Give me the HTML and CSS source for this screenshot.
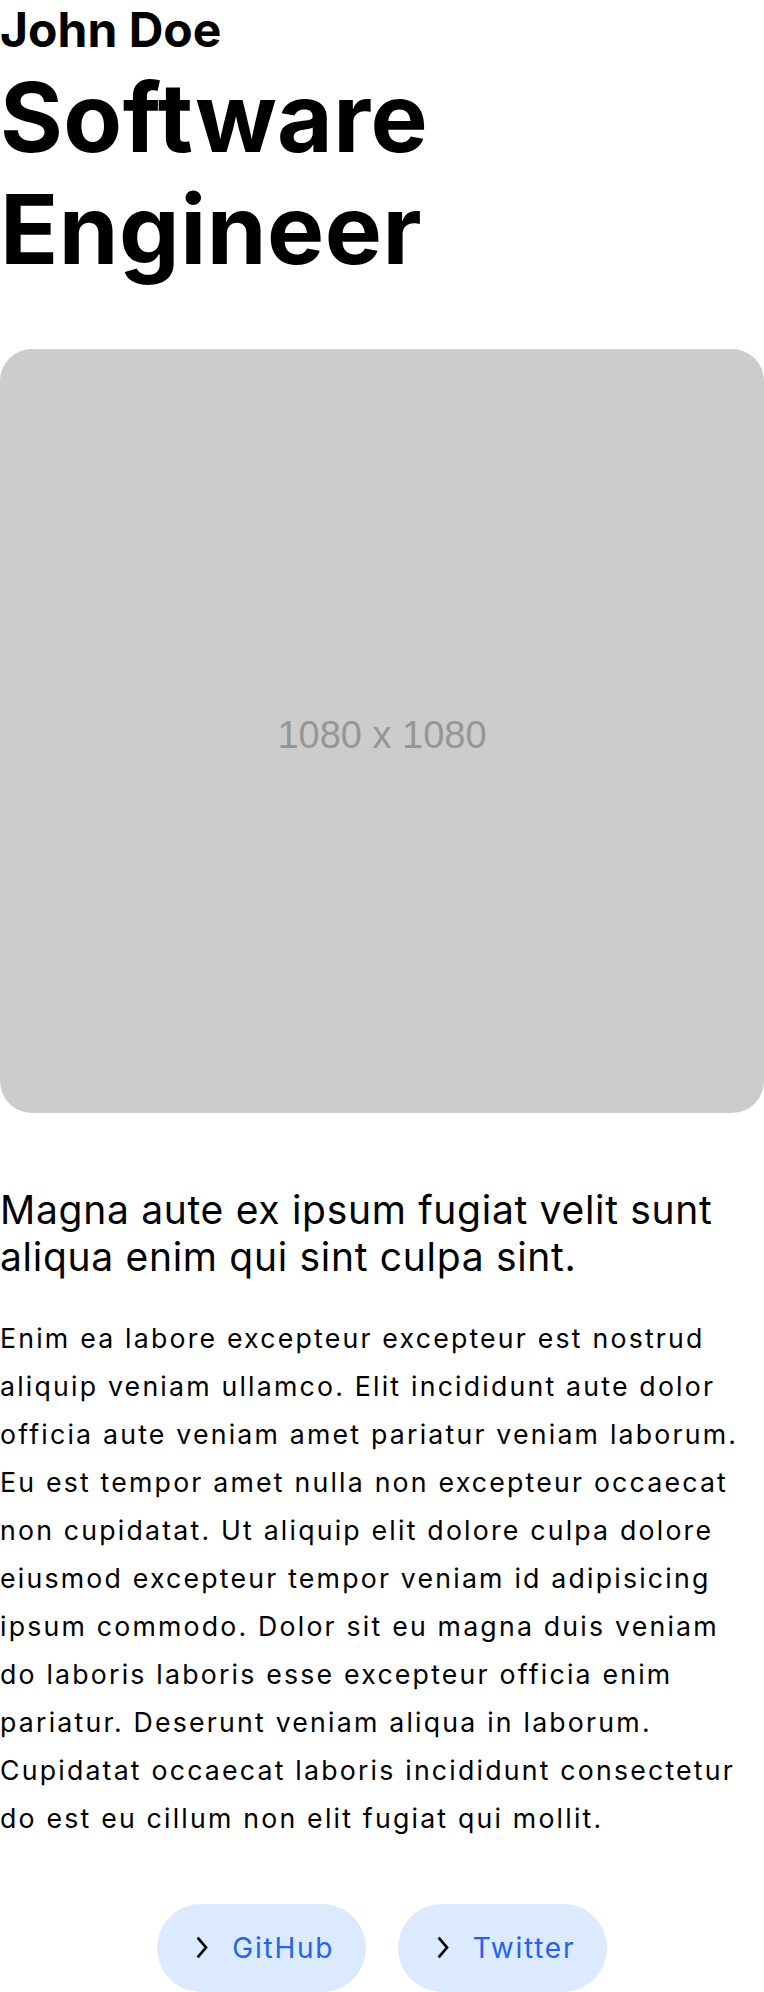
FILE: index.html
```html
<!DOCTYPE html>
<html lang="en">
<head>
<meta charset="utf-8">
<title>John Doe - Software Engineer</title>
<link rel="stylesheet" href="styles.css">
</head>
<body>
<main class="page">
  <header class="intro">
    <h2 class="name">John Doe</h2>
    <h1 class="role">Software Engineer</h1>
  </header>
  <div class="photo"><span class="photo-label">1080 x 1080</span></div>
  <section class="about">
    <p class="lead">Magna aute ex ipsum fugiat velit sunt aliqua enim qui sint culpa sint.</p>
    <p class="body-text">Enim ea labore excepteur excepteur est nostrud aliquip veniam ullamco. Elit incididunt aute dolor officia aute veniam amet pariatur veniam laborum. Eu est tempor amet nulla non excepteur occaecat non cupidatat. Ut aliquip elit dolore culpa dolore eiusmod excepteur tempor veniam id adipisicing ipsum commodo. Dolor sit eu magna duis veniam do laboris laboris esse excepteur officia enim pariatur. Deserunt veniam aliqua in laborum. Cupidatat occaecat laboris incididunt consectetur do est eu cillum non elit fugiat qui mollit.</p>
  </section>
  <nav class="links">
    <a class="link-btn" href="#"><svg class="chev" width="12" height="23" viewBox="0 0 12 23"><polyline points="1.6,1.6 10,11.5 1.6,21.4" fill="none" stroke="#000" stroke-width="2.7" stroke-linejoin="miter"/></svg><span>GitHub</span></a>
    <a class="link-btn" href="#"><svg class="chev" width="12" height="23" viewBox="0 0 12 23"><polyline points="1.6,1.6 10,11.5 1.6,21.4" fill="none" stroke="#000" stroke-width="2.7" stroke-linejoin="miter"/></svg><span>Twitter</span></a>
  </nav>
</main>
</body>
</html>
```
FILE: styles.css
```css
* { box-sizing: border-box; }
html, body { margin: 0; padding: 0; background: #fff; }
body {
  font-family: Inter, "Noto Sans", sans-serif;
  color: #000;
}
.page { display: flex; flex-direction: column; }
.intro { display: flex; flex-direction: column; gap: 2px; }
.name {
  margin: 0;
  font-size: 48px;
  font-weight: 700;
  line-height: normal;
}
.role {
  margin: 0;
  font-size: 96px;
  font-weight: 700;
  line-height: 112px;
  letter-spacing: 0.5px;
}
.photo {
  margin-top: 64px;
  width: 764px;
  height: 764px;
  padding-top: 8px;
  border-radius: 32px;
  background: #cccccc;
  display: flex;
  align-items: center;
  justify-content: center;
}
.photo-label {
  font-family: "Liberation Sans", Arial, sans-serif;
  font-size: 38px;
  color: #969696;
}
.about { margin-top: 74px; display: flex; flex-direction: column; gap: 33px; }
.lead {
  margin: 0;
  font-size: 39px;
  line-height: 46.8px;
  font-weight: 400;
  letter-spacing: 0.7px;
}
.body-text {
  margin: 0;
  font-size: 26.7px;
  line-height: 48px;
  letter-spacing: 2.2px;
}
.links {
  margin-top: 62px;
  display: flex;
  justify-content: center;
  gap: 32px;
}
.link-btn {
  display: flex;
  align-items: center;
  gap: 24px;
  height: 88px;
  padding: 0 31.5px 0 39px;
  border-radius: 44px;
  background: #dbeafe;
  color: #2563eb;
  font-size: 28px;
  letter-spacing: 1.75px;
  text-decoration: none;
}
.chev { display: block; flex: none; }
```
